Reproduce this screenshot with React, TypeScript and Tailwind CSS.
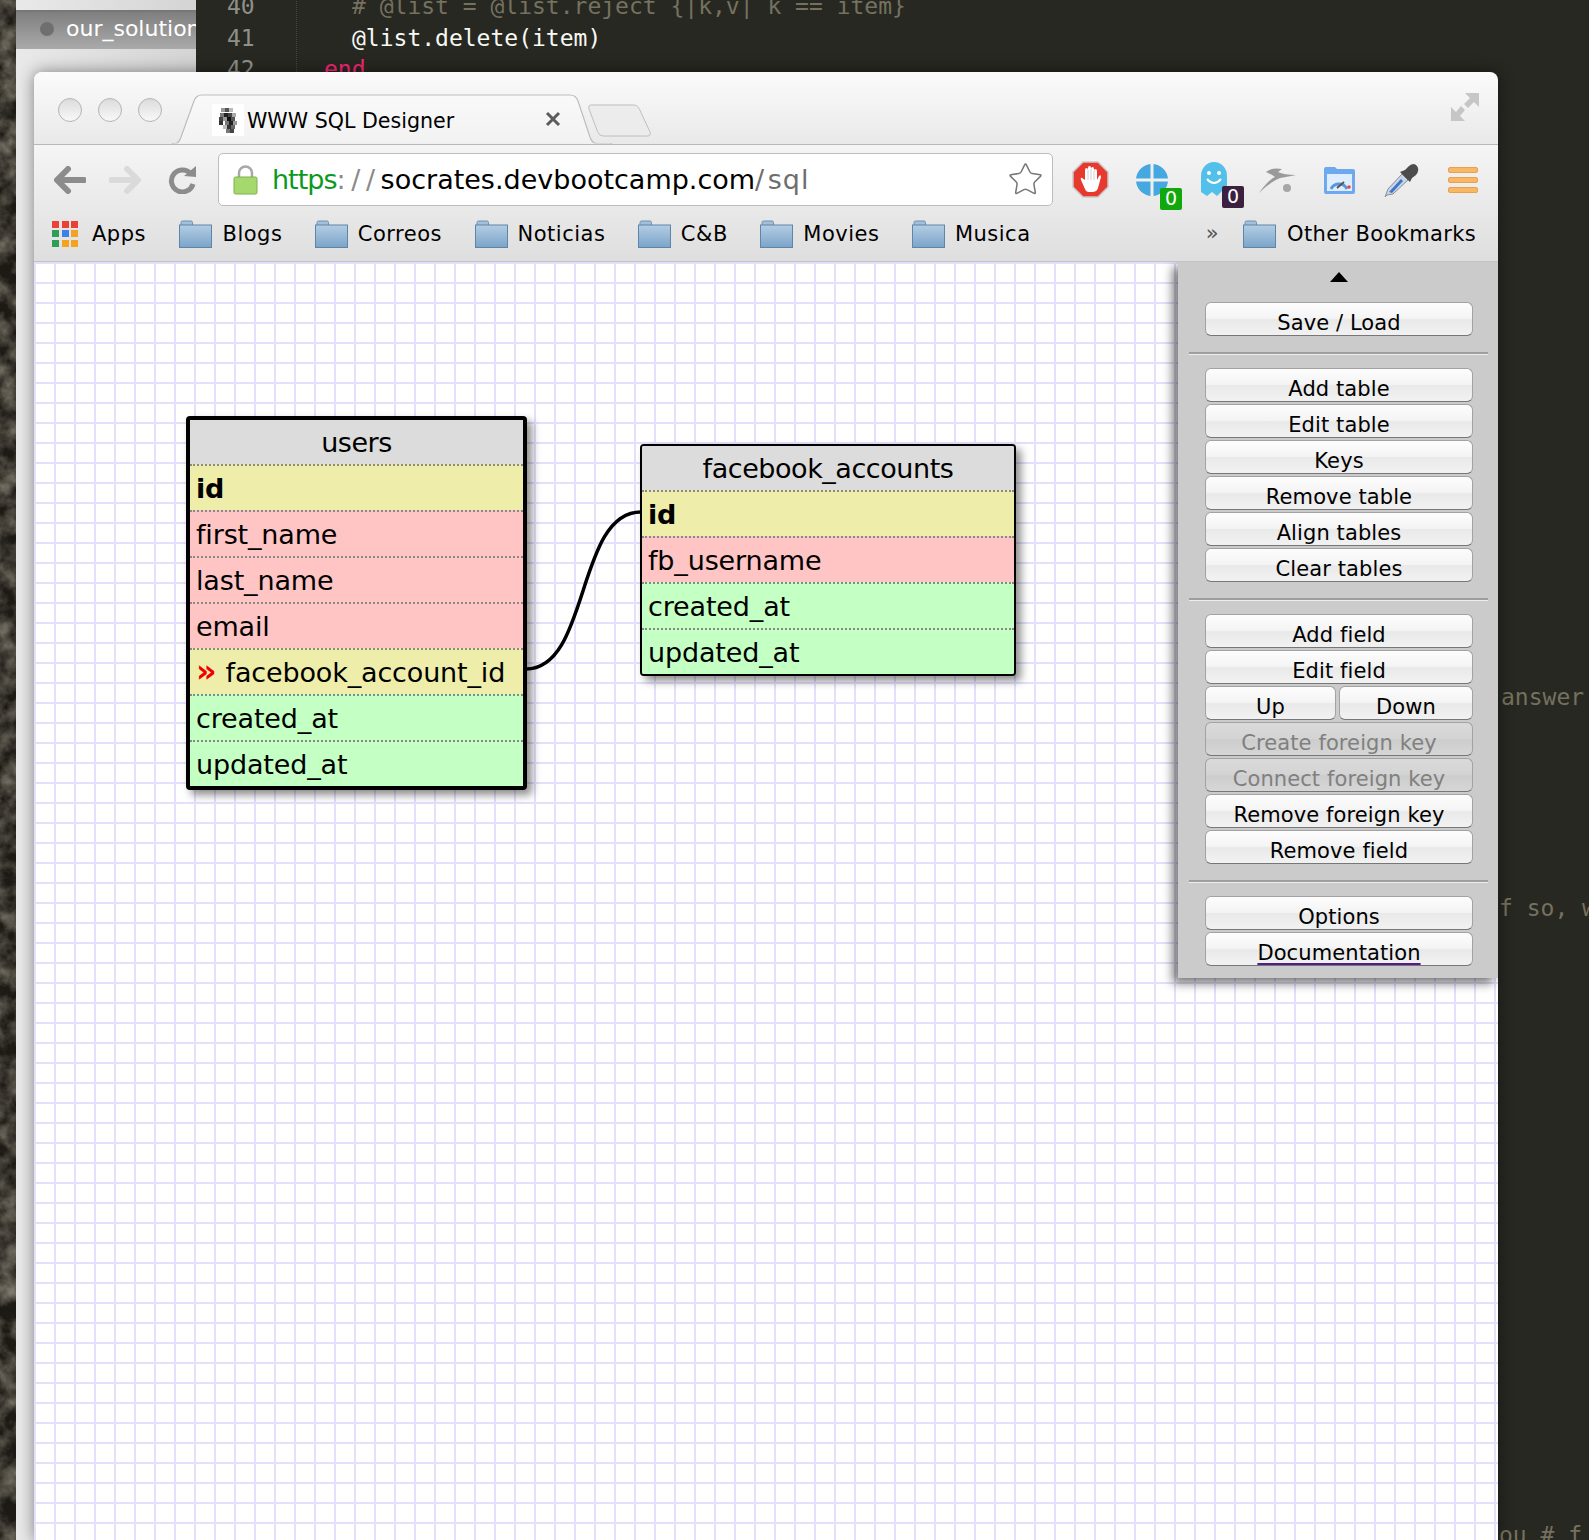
import { Star } from "lucide-react"

const sans = "font-['DejaVu_Sans',sans-serif]"

function Folder() {
  return (
    <svg width="33" height="28" viewBox="0 0 33 28" className="shrink-0">
      <defs>
        <linearGradient id="fld" x1="0" y1="0" x2="0" y2="1">
          <stop offset="0" stopColor="#b4cde4" />
          <stop offset="1" stopColor="#7ba4c9" />
        </linearGradient>
      </defs>
      <path d="M2 5V2.5Q2 1 3.5 1H12Q13.5 1 13.5 2.5V5" fill="#a3bfd9" stroke="#6d93b5" />
      <rect x="0.5" y="5" width="32" height="22.5" fill="url(#fld)" stroke="#5f86a9" />
    </svg>
  )
}

function Bookmark({ label }: { label: string }) {
  return (
    <div className="flex items-center gap-[10px]">
      <Folder />
      <span className="pt-[3px]">{label}</span>
    </div>
  )
}

function AppsIcon() {
  const colors = ["#ea4335", "#ea4335", "#ea4335", "#2e9e56", "#3b82e8", "#f2a31f", "#2e9e56", "#f2a31f", "#f2a31f"]
  return (
    <div className="grid grid-cols-3 gap-[2.5px] w-[26px] h-[26px] shrink-0">
      {colors.map((c, i) => (
        <div key={i} style={{ backgroundColor: c }} />
      ))}
    </div>
  )
}

function Badge({ bg, left }: { bg: string; left: string }) {
  return (
    <div
      className={`absolute top-[24px] w-[22px] h-[22px] rounded-[2px] flex items-center justify-center text-white text-[19px] leading-none ${left}`}
      style={{ backgroundColor: bg }}
    >
      0
    </div>
  )
}

function Favicon() {
  const pixels = [
    [9, 4, "#999"], [13, 4, "#555"], [17, 4, "#bbb"], [8, 9, "#777"], [12, 9, "#222"], [16, 9, "#444"], [20, 9, "#aaa"],
    [7, 13, "#444"], [11, 13, "#999"], [15, 13, "#111"], [19, 13, "#555"], [7, 17, "#333"], [13, 17, "#777"], [17, 17, "#222"],
    [21, 17, "#999"], [11, 21, "#bbb"], [15, 21, "#333"], [19, 21, "#666"], [14, 25, "#777"], [18, 25, "#444"],
  ] as const
  return (
    <svg width="32" height="32" viewBox="0 0 32 32" className="shrink-0">
      <rect width="32" height="32" fill="#fff" />
      {pixels.map(([x, y, c], i) => (
        <rect key={i} x={x} y={y} width="4" height="4" fill={c} />
      ))}
    </svg>
  )
}

function Tab() {
  return (
    <div className="relative w-[440px] h-[50px] -ml-[18px]">
      <svg width="440" height="50" viewBox="0 0 440 50" className="absolute inset-0">
        <defs>
          <linearGradient id="tabg" x1="0" y1="0" x2="0" y2="1">
            <stop offset="0" stopColor="#f9f9f9" />
            <stop offset="1" stopColor="#f2f2f2" />
          </linearGradient>
        </defs>
        <path d="M0 49.5H3Q7 49.5 9 43L22 7Q24 1 30 1H398Q404 1 406 7L418 43Q420 49.5 425 49.5H440" fill="url(#tabg)" stroke="#bdbdbd" strokeWidth="1.2" />
        <path d="M1 50.5H439" stroke="#f2f2f2" strokeWidth="2" />
      </svg>
      <div className="absolute left-[40px] top-[9px] flex items-center gap-[3px] text-[20.6px] text-black">
        <Favicon />
        <span className="pt-[3px]">WWW SQL Designer</span>
      </div>
      <svg width="16" height="16" viewBox="0 0 16 16" className="absolute left-[373px] top-[17px]">
        <path d="M2 2L14 14M14 2L2 14" stroke="#5c5c5c" strokeWidth="3" />
      </svg>
    </div>
  )
}

function TitleBar() {
  return (
    <div className="relative h-[73px] shrink-0 flex items-end pl-[156px] rounded-t-[8px] border-b border-[#b8b8b8] bg-[linear-gradient(#fbfbfb,#e9e9e9)]">
      <div className="absolute left-[24px] top-[26px] flex gap-[16px]">
        {[0, 1, 2].map((i) => (
          <div key={i} className="w-[24px] h-[24px] rounded-full border border-[#b4b4b4] bg-[linear-gradient(#dcdcdc,#f8f8f8)]" />
        ))}
      </div>
      <Tab />
      <svg width="64" height="33" viewBox="0 0 68 34" className="-ml-[24px] mb-[7px]" preserveAspectRatio="none">
        <path d="M3 1H48Q53 1 55 6L66 29Q67 33 63 33H16Q12 33 10 28L1 5Q0 1 3 1Z" fill="#ececec" stroke="#bcbcbc" />
      </svg>
      <svg width="30" height="30" viewBox="0 0 30 30" className="absolute right-[18px] top-[20px]">
        <path d="M29 1V15L24 10L18 16L14 12L20 6L15 1Z" fill="#c6c6c6" />
        <path d="M1 29V15L6 20L11 14L15 18L10 24L15 29Z" fill="#c6c6c6" />
      </svg>
    </div>
  )
}

function NavButtons() {
  return (
    <div className="flex items-center shrink-0">
      <svg width="32" height="28" viewBox="0 0 32 28" className="ml-[20px]">
        <path d="M14 3L3 14L14 25M4 14H30" fill="none" stroke="#8c8c8c" strokeWidth="6" strokeLinecap="round" strokeLinejoin="round" />
      </svg>
      <svg width="32" height="28" viewBox="0 0 32 28" className="ml-[23px]">
        <path d="M18 3L29 14L18 25M28 14H2" fill="none" stroke="#dadada" strokeWidth="6" strokeLinecap="round" strokeLinejoin="round" />
      </svg>
      <svg width="29" height="29" viewBox="0 0 29 29" className="ml-[27px]">
        <path d="M23 9A11 11 0 1 0 25 19" fill="none" stroke="#8c8c8c" strokeWidth="5" />
        <path d="M16 11L28 1V12Z" fill="#8c8c8c" />
      </svg>
    </div>
  )
}

function AddressBar() {
  return (
    <div className="ml-[21px] w-[835px] h-[53px] shrink-0 flex items-center rounded-[5px] border border-[#bdbdbd] bg-white pl-[14px] pr-[8px]">
      <svg width="25" height="30" viewBox="0 0 25 30" className="shrink-0">
        <path d="M6 13V8A6.5 6.5 0 0 1 19 8V13" fill="none" stroke="#a8a8a8" strokeWidth="2.5" />
        <rect x="1" y="12" width="23" height="17" rx="1.5" fill="#a5d96d" stroke="#7fb04a" />
      </svg>
      <div className="ml-[14px] flex-1 pt-[1px] text-[27px] text-black whitespace-nowrap">
        <span className="text-[#0a9a1e] tracking-[-1px]">https</span>
        <span className="text-[#8a8a8a] tracking-[5.6px]">://</span>
        <span>socrates.devbootcamp.com</span>
        <span className="text-[#6e6e6e] tracking-[3.5px]">/</span>
        <span className="text-[#6e6e6e] tracking-[1px]">sql</span>
      </div>
      <Star size={37} strokeWidth={1} className="text-[#777] shrink-0" />
    </div>
  )
}

function ExtensionIcons() {
  return (
    <div className="flex items-center shrink-0">
      <svg width="37" height="37" viewBox="0 0 37 37" className="ml-[19px]">
        <path d="M11 1H26L36 11V26L26 36H11L1 26V11Z" fill="#e8392f" stroke="#c9c9c9" strokeWidth="1.5" />
        <path d="M13 28L9 19Q8 16 10 17L13 19V9Q13 7 14.5 7T16 9V7Q16 5 17.5 5T19 7V8Q19 6 20.5 6T22 8V10Q22 8 23.5 8T25 10V19L27 15Q29 13 29 16L26 27Q25 31 20 31H17Q14 31 13 28Z" fill="#fff" />
        <path d="M16 9V19M19 8V19M22 10V19" stroke="#c4c4c4" strokeWidth="0.8" />
      </svg>
      <div className="relative ml-[27px] w-[32px] h-[32px]">
        <svg width="32" height="32" viewBox="0 0 32 32">
          <circle cx="16" cy="16" r="16" fill="#45a8e0" />
          <path d="M16 0V32M0 16H32" stroke="#f0f0f0" strokeWidth="3" />
        </svg>
        <Badge bg="#11a80e" left="left-[24px]" />
      </div>
      <div className="relative ml-[32px] w-[28px] h-[36px]">
        <svg width="28" height="36" viewBox="0 0 28 36">
          <path d="M1 14A13 14 0 0 1 27 14V33L22 29L17 34L12 30L7 34L1 30Z" fill="#52c0ea" />
          <circle cx="9" cy="11" r="2" fill="#fff" />
          <circle cx="19" cy="11" r="2" fill="#fff" />
          <path d="M7 17Q14 25 21 17" fill="none" stroke="#fff" strokeWidth="2" />
        </svg>
        <Badge bg="#3b2040" left="left-[22px]" />
      </div>
      <svg width="38" height="28" viewBox="0 0 38 28" className="ml-[30px]">
        <path d="M1 27Q10 14 17 11Q13 8 8 6Q14 1 24 3L20 6Q26 9 38 9Q28 11 22 12Q12 16 1 27Z" fill="#9a9a9a" />
        <circle cx="29" cy="22" r="4" fill="#a6a6a6" />
      </svg>
      <svg width="31" height="28" viewBox="0 0 31 28" className="ml-[28px]">
        <path d="M0 3Q0 1 2 1H11L13 3H29Q31 3 31 5V26Q31 28 29 28H2Q0 28 0 26Z" fill="#6ea9ef" />
        <rect x="3" y="8" width="25" height="17" fill="#dfeeff" />
        <path d="M7 23A9 9 0 0 1 23 23" fill="none" stroke="#5a96e0" strokeWidth="3" />
        <path d="M13 22L20 16" stroke="#555" strokeWidth="2" />
        <circle cx="25" cy="21" r="1.8" fill="#e8483a" />
      </svg>
      <svg width="36" height="36" viewBox="0 0 36 36" className="ml-[29px]">
        <path d="M3 33L1 35L4 27L18 12L24 18L9 32Z" fill="#c9d4e4" stroke="#8a8f98" />
        <path d="M5 30L17 17L19 19L8 31Z" fill="#3f74cc" />
        <path d="M16 10L26 20L28 16L32 13Q36 8 33 4T25 4L21 8Z" fill="#4c4c4c" />
      </svg>
      <div className="ml-[28px] w-[30px] flex flex-col gap-[4px]">
        {[0, 1, 2].map((i) => (
          <div key={i} className="h-[6px] rounded-[2px] bg-[#f7b763] border border-[#ea9f55]" />
        ))}
      </div>
    </div>
  )
}

function BookmarksBar() {
  return (
    <div className="h-[48px] pb-[8px] shrink-0 flex items-center pl-[18px] pr-[22px] text-[21px] text-black tracking-[0.5px] border-b border-[#c2c2c2]">
      <div className="flex items-center gap-[32.5px]">
        <div className="flex items-center gap-[14px] mr-[1px]">
          <AppsIcon />
          <span className="pt-[3px]">Apps</span>
        </div>
        {["Blogs", "Correos", "Noticias", "C&B", "Movies", "Musica"].map((b) => (
          <Bookmark key={b} label={b} />
        ))}
      </div>
      <div className="ml-auto flex items-center gap-[24px]">
        <span className="text-[#555]">»</span>
        <div className="tracking-[0.35px] flex items-center gap-[11px]">
          <Folder />
          <span className="pt-[3px]">Other Bookmarks</span>
        </div>
      </div>
    </div>
  )
}

type Field = { name: string; tone: "key" | "text" | "date"; bold?: boolean; fk?: boolean }

const toneClass = {
  key: "bg-[#eeeeaa]",
  text: "bg-[#ffc4c4]",
  date: "bg-[#c4ffc4]",
}

function DbTable({
  title,
  fields,
  className,
}: {
  title: string
  fields: Field[]
  className: string
}) {
  return (
    <div className={`absolute rounded-[4px] border-black bg-white shadow-[5px_5px_9px_rgba(0,0,0,0.45)] overflow-hidden text-[27px] text-black ${className}`}>
      <div className="h-[44px] pt-[2px] flex items-center justify-center bg-[#dcdcdc] tracking-[-0.45px]">{title}</div>
      {fields.map((f) => (
        <div
          key={f.name}
          className={`h-[46px] pt-[3px] flex items-center px-[6px] border-t-2 border-dotted border-[#888] tracking-[-0.15px] ${toneClass[f.tone]} ${f.bold ? "font-bold" : ""}`}
        >
          {f.fk && <span className="text-[#f00000] font-bold text-[32px] mr-[9px] leading-none -mt-[5px]">»</span>}
          {f.name}
        </div>
      ))}
    </div>
  )
}

function AquaButton({
  label,
  disabled,
  link,
  className = "",
}: {
  label: string
  disabled?: boolean
  link?: boolean
  className?: string
}) {
  return (
    <div
      className={`h-[34px] flex items-start justify-center pt-[6px] rounded-[6px] border border-[#a2a2a2] border-b-[#777] text-[21px] leading-[28px] tracking-[0.1px] ${
        disabled
          ? "text-[#808080] bg-[linear-gradient(#dadada,#d4d4d4_48%,#cdcdcd_52%,#d6d6d6)]"
          : "text-black bg-[linear-gradient(#fdfdfd,#f4f4f4_48%,#e9e9e9_52%,#f2f2f2)]"
      } ${className}`}
    >
      <span className={link ? "underline decoration-[#551a8b] decoration-2 underline-offset-[3px]" : ""}>{label}</span>
    </div>
  )
}

function Divider() {
  return <div className="mt-[16px] mb-[13px] -ml-[16px] -mr-[15px] h-[3px] border-t-2 border-[#9e9e9e] border-b border-b-[#eeeeee]" />
}

function SidePanel() {
  return (
    <div className="absolute right-0 top-0 w-[320px] h-[716px] bg-[#cbcbcb] pt-[10px] pl-[27px] pr-[25px] shadow-[-5px_5px_10px_rgba(0,0,0,0.55)]">
      <div className="flex justify-center">
        <div className="w-0 h-0 border-l-[9px] border-r-[9px] border-b-[10px] border-l-transparent border-r-transparent border-b-black" />
      </div>
      <div className="mt-[20px]">
        <AquaButton label="Save / Load" />
      </div>
      <Divider />
      <div className="flex flex-col gap-[2px]">
        {["Add table", "Edit table", "Keys", "Remove table", "Align tables", "Clear tables"].map((l) => (
          <AquaButton key={l} label={l} />
        ))}
      </div>
      <Divider />
      <div className="flex flex-col gap-[2px]">
        <AquaButton label="Add field" />
        <AquaButton label="Edit field" />
        <div className="flex gap-[3px]">
          <AquaButton label="Up" className="w-[131px] shrink-0" />
          <AquaButton label="Down" className="flex-1" />
        </div>
        <AquaButton label="Create foreign key" disabled />
        <AquaButton label="Connect foreign key" disabled />
        <AquaButton label="Remove foreign key" />
        <AquaButton label="Remove field" />
      </div>
      <Divider />
      <div className="flex flex-col gap-[2px]">
        <AquaButton label="Options" />
        <AquaButton label="Documentation" link />
      </div>
    </div>
  )
}

const usersFields: Field[] = [
  { name: "id", tone: "key", bold: true },
  { name: "first_name", tone: "text" },
  { name: "last_name", tone: "text" },
  { name: "email", tone: "text" },
  { name: "facebook_account_id", tone: "key", fk: true },
  { name: "created_at", tone: "date" },
  { name: "updated_at", tone: "date" },
]

const facebookFields: Field[] = [
  { name: "id", tone: "key", bold: true },
  { name: "fb_username", tone: "text" },
  { name: "created_at", tone: "date" },
  { name: "updated_at", tone: "date" },
]

function Designer() {
  return (
    <div className="relative flex-1 overflow-hidden bg-white bg-[linear-gradient(#e2e0fb_2px,transparent_2px),linear-gradient(90deg,#e2e0fb_2px,transparent_2px)] bg-[size:20px_20px]">
      <svg width="1464" height="600" className="absolute left-0 top-0">
        {/* relation between users and facebook_accounts */}
        <path d="M492 407C556 407 542 250 607 250" fill="none" stroke="#000" strokeWidth="3.5" />
      </svg>
      <DbTable title="users" fields={usersFields} className="left-[152px] top-[154px] w-[341px] border-4" />
      <DbTable title="facebook_accounts" fields={facebookFields} className="left-[606px] top-[182px] w-[376px] border-2" />
      <SidePanel />
    </div>
  )
}

function EditorBackdrop() {
  return (
    <div className="absolute left-[196px] top-0 right-0 bottom-0 overflow-hidden bg-[#272822] font-['DejaVu_Sans_Mono',monospace] text-[23px] leading-[31.5px]">
      <div className="-mt-[9px] flex">
        <div className="pl-[31px] w-[101px] text-[#8f908a] border-r border-dotted border-[#46473f]">
          <div>40</div>
          <div>41</div>
          <div>42</div>
        </div>
        <div className="pl-[27px] whitespace-nowrap">
          <div className="pl-[28px] text-[#75715e]">{"# @list = @list.reject {|k,v| k == item}"}</div>
          <div className="pl-[28px] text-[#f8f8f2]">@list.delete(item)</div>
          <div className="text-[#f92672]">end</div>
        </div>
      </div>
      <div className="absolute left-[1305px] top-[682px] text-[#75715e] whitespace-nowrap">answer</div>
      <div className="absolute left-[1303px] top-[893px] text-[#75715e] whitespace-nowrap">f so, w</div>
      <div className="absolute left-[1303px] top-[1520px] text-[#75715e] whitespace-nowrap">ou # f</div>
    </div>
  )
}

function Sidebar() {
  return (
    <div className="absolute left-[16px] top-0 w-[180px] h-full bg-[linear-gradient(90deg,#e9e9e9,#d4d4d4)]">
      <div className="mt-[10px] h-[39px] flex items-center pl-[24px] overflow-hidden text-white text-[22px] leading-none pb-[3px] whitespace-nowrap border-t-2 border-[#777] bg-[linear-gradient(#7f7f7f,#aaaaaa)]">
        <div className="w-[14px] h-[14px] rounded-full bg-[#6f6f6f] shrink-0 mr-[12px]" />
        our_solution
      </div>
    </div>
  )
}

function Wallpaper() {
  return (
    <svg width="16" height="1540" className="absolute left-0 top-0">
      <filter id="rock">
        <feTurbulence type="fractalNoise" baseFrequency="0.05" numOctaves="4" seed="7" />
        <feColorMatrix values="0 0 0 0 0.36  0 0 0 0 0.33  0 0 0 0 0.26  1.3 0 0 0 -0.4" />
      </filter>
      <rect width="16" height="1540" fill="#1d1a15" />
      <rect width="16" height="1540" filter="url(#rock)" />
    </svg>
  )
}

export default function App() {
  return (
    <div className={`relative w-[1589px] h-[1540px] overflow-hidden bg-[#272822] ${sans}`}>
      <Wallpaper />
      <Sidebar />
      <EditorBackdrop />
      <div className="absolute left-[34px] top-[72px] w-[1464px] h-[1468px] flex flex-col rounded-t-[8px] shadow-[0_0_16px_rgba(0,0,0,0.45)]">
        <TitleBar />
        <div className="shrink-0 bg-[linear-gradient(#f5f5f5,#dedede)]">
          <div className="h-[69px] flex items-center">
            <NavButtons />
            <AddressBar />
            <ExtensionIcons />
          </div>
          <BookmarksBar />
        </div>
        <Designer />
      </div>
    </div>
  )
}
